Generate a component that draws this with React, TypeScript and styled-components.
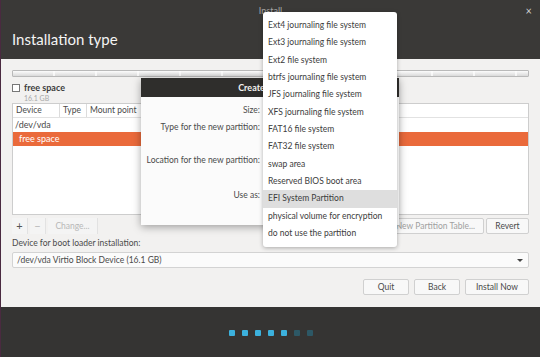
import * as React from "react";
import styled, { createGlobalStyle } from "styled-components";

const FONT = `Lato, "Open Sans", sans-serif`;

const GlobalStyle = createGlobalStyle`
  html, body {
    margin: 0;
    padding: 0;
    width: 540px;
    height: 357px;
    overflow: hidden;
    background: #2c2b2a;
  }
  * { box-sizing: border-box; }
`;

const fsTypes = [
  "Ext4 journaling file system",
  "Ext3 journaling file system",
  "Ext2 file system",
  "btrfs journaling file system",
  "JFS journaling file system",
  "XFS journaling file system",
  "FAT16 file system",
  "FAT32 file system",
  "swap area",
  "Reserved BIOS boot area",
  "EFI System Partition",
  "physical volume for encryption",
  "do not use the partition",
];

export default function App() {
  return (
    <>
      <GlobalStyle />
      <Window>
        <Header>
          <WindowTitle>Install</WindowTitle>
          <CloseButton>×</CloseButton>
          <PageTitle>Installation type</PageTitle>
        </Header>

        <Content>
          <PartitionBar />
          <Legend>
            <Check />
            <LegendText>
              <strong>free space</strong>
              <small>16.1 GB</small>
            </LegendText>
          </Legend>

          <Table>
            <HeadRow>
              <HeadCell $w={47}>Device</HeadCell>
              <HeadCell $w={27}>Type</HeadCell>
              <HeadCell $w={70}>Mount point</HeadCell>
              <HeadCell $w={60} />
              <HeadCell $w={60} />
              <HeadCell $w={60} />
              <HeadCell $w={60} $last />
            </HeadRow>
            <Row>/dev/vda</Row>
            <Row $selected>free space</Row>
          </Table>

          <Toolbar>
            <ToolGroup>
              <ToolButton>+</ToolButton>
              <ToolButton $disabled>−</ToolButton>
              <ToolButton $disabled $wide>Change...</ToolButton>
            </ToolGroup>
            <ToolGroup>
              <Button $disabled>New Partition Table...</Button>
              <Button $w={43}>Revert</Button>
            </ToolGroup>
          </Toolbar>

          <FieldLabel>Device for boot loader installation:</FieldLabel>
          <Combo>
            <span>/dev/vda Virtio Block Device (16.1 GB)</span>
            <Caret />
          </Combo>

          <Actions>
            <Button $w={46}>Quit</Button>
            <Button $w={46}>Back</Button>
            <Button $w={64}>Install Now</Button>
          </Actions>
        </Content>

        <Footer>
          {[1, 1, 1, 1, 1, 0, 0].map((on, i) => (
            <Dot key={i} $on={!!on} />
          ))}
        </Footer>

        <Dialog>
          <DialogHeader>Create partition</DialogHeader>
          <DialogBody>
            <DialogLabel $top={0}>Size:</DialogLabel>
            <DialogLabel $top={0}>Type for the new partition:</DialogLabel>
            <DialogLabel $top={16}>Location for the new partition:</DialogLabel>
            <DialogLabel $top={18}>Use as:</DialogLabel>
          </DialogBody>
        </Dialog>

        <Menu>
          {fsTypes.map((t) => (
            <MenuItem key={t} $active={t === "EFI System Partition"}>
              {t}
            </MenuItem>
          ))}
        </Menu>
      </Window>
    </>
  );
}

const Window = styled.div`
  position: relative;
  width: 540px;
  height: 357px;
  display: flex;
  flex-direction: column;
  font-family: ${FONT};
  font-size: 8.5px;
  color: #3c3c3c;
  border-left: 1px solid #4a2a40;
`;

const Header = styled.div`
  position: relative;
  height: 59px;
  background: #3a3937;
  padding: 30px 0 0 11px;
`;

const WindowTitle = styled.div`
  position: absolute;
  top: 5px;
  left: 0;
  right: 0;
  text-align: center;
  color: #a9a9a9;
  font-size: 9px;
`;

const CloseButton = styled.div`
  position: absolute;
  top: 4px;
  right: 8px;
  color: #cfcfcf;
  font-size: 11px;
`;

const PageTitle = styled.h1`
  margin: 0;
  font-weight: 400;
  font-size: 15px;
  color: #f4f4f4;
`;

const Content = styled.div`
  height: 248px;
  background: #f2f1f0;
  padding: 11px 11px 0 11px;
  display: flex;
  flex-direction: column;
`;

const PartitionBar = styled.div`
  height: 7px;
  border: 1px solid #b9b9b9;
  border-radius: 1px;
  background:
    repeating-linear-gradient(90deg, transparent 0 40px, rgba(255,255,255,0.7) 40px 42px),
    linear-gradient(#fbfbfb, #dadada);
`;

const Legend = styled.div`
  display: flex;
  align-items: flex-start;
  gap: 4px;
  margin-top: 6px;
  height: 20px;
`;

const Check = styled.div`
  width: 8px;
  height: 8px;
  margin-top: 1px;
  border: 1px solid #777;
  background: #fff;
`;

const LegendText = styled.div`
  display: flex;
  flex-direction: column;
  line-height: 10px;
  strong {
    font-size: 9px;
    color: #3c3c3c;
  }
  small {
    font-size: 7px;
    color: #a8a8a8;
  }
`;

const Table = styled.div`
  height: 112px;
  border: 1px solid #cdcdcd;
  background: #fff;
  display: flex;
  flex-direction: column;
`;

const HeadRow = styled.div`
  display: flex;
  height: 14px;
  border-bottom: 1px solid #e2e2e2;
`;

const HeadCell = styled.div<{ $w: number; $last?: boolean }>`
  width: ${(p) => p.$w}px;
  flex: ${(p) => (p.$last ? 1 : "none")};
  padding-left: 3px;
  line-height: 13px;
  color: #4a4a4a;
  border-right: ${(p) => (p.$last ? "none" : "1px solid #dcdcdc")};
`;

const Row = styled.div<{ $selected?: boolean }>`
  height: 14px;
  line-height: 14px;
  padding-left: ${(p) => (p.$selected ? 6 : 2)}px;
  color: ${(p) => (p.$selected ? "#fff" : "#4a4a4a")};
  background: ${(p) => (p.$selected ? "#ea6a3b" : "transparent")};
  font-size: 9px;
`;

const Toolbar = styled.div`
  display: flex;
  justify-content: space-between;
  margin-top: 3px;
  height: 16px;
`;

const ToolGroup = styled.div`
  display: flex;
  gap: 2px;
`;

const ToolButton = styled.div<{ $disabled?: boolean; $wide?: boolean }>`
  width: ${(p) => (p.$wide ? 50 : 16)}px;
  height: 16px;
  line-height: 16px;
  text-align: center;
  font-size: ${(p) => (p.$wide ? 8.5 : 11)}px;
  color: ${(p) => (p.$disabled ? "#b8b8b8" : "#555")};
  background: #f4f4f4;
  border-right: 1px solid #e2e2e2;
`;

const Button = styled.div<{ $disabled?: boolean; $w?: number }>`
  ${(p) => (p.$w ? `width: ${p.$w}px;` : "padding: 0 8px;")}
  height: 16px;
  line-height: 14px;
  text-align: center;
  border: 1px solid #d0d0d0;
  border-radius: 2px;
  background: #f8f8f8;
  color: ${(p) => (p.$disabled ? "#a0a0a0" : "#4a4a4a")};
  font-size: 8.5px;
`;

const FieldLabel = styled.div`
  margin-top: 4px;
  line-height: 10px;
  color: #4a4a4a;
`;

const Combo = styled.div`
  margin-top: 4px;
  height: 16px;
  display: flex;
  align-items: center;
  justify-content: space-between;
  padding: 0 5px 0 4px;
  border: 1px solid #d3d3d3;
  border-radius: 2px;
  background: #fbfbfb;
  color: #4a4a4a;
  font-size: 8.5px;
`;

const Caret = styled.div`
  width: 0;
  height: 0;
  border-left: 3px solid transparent;
  border-right: 3px solid transparent;
  border-top: 3px solid #444;
`;

const Actions = styled.div`
  margin-top: 11px;
  display: flex;
  justify-content: flex-end;
  gap: 5px;
`;

const Footer = styled.div`
  flex: 1;
  background: #353433;
  display: flex;
  align-items: center;
  justify-content: center;
  gap: 7px;
  padding-top: 2px;
`;

const Dot = styled.div<{ $on: boolean }>`
  width: 6px;
  height: 6px;
  border-radius: 1px;
  background: ${(p) => (p.$on ? "#3cb1dd" : "#2d5866")};
`;

const Dialog = styled.div`
  position: absolute;
  left: 140px;
  top: 78px;
  width: 258px;
  height: 147px;
  background: #fbfbfb;
  box-shadow: 0 2px 8px rgba(0, 0, 0, 0.35);
  display: flex;
  flex-direction: column;
`;

const DialogHeader = styled.div`
  height: 19px;
  line-height: 19px;
  background: #2f2e2c;
  color: #f2f2f2;
  font-weight: 700;
  text-align: center;
  font-size: 9px;
`;

const DialogBody = styled.div`
  display: flex;
  flex-direction: column;
  align-items: flex-end;
  width: 119px;
  padding-top: 5px;
`;

const DialogLabel = styled.div<{ $top: number }>`
  margin-top: ${(p) => p.$top}px;
  height: 17px;
  line-height: 17px;
  color: #4a4a4a;
  white-space: nowrap;
`;

const Menu = styled.div`
  position: absolute;
  left: 262px;
  top: 12px;
  width: 134px;
  padding: 5px 0;
  background: #fff;
  border-radius: 3px;
  box-shadow: 0 1px 4px rgba(0, 0, 0, 0.3);
`;

const MenuItem = styled.div<{ $active: boolean }>`
  height: 17.33px;
  line-height: 17.33px;
  padding-left: 5px;
  white-space: nowrap;
  color: #3c3c3c;
  background: ${(p) => (p.$active ? "#dedede" : "transparent")};
`;
